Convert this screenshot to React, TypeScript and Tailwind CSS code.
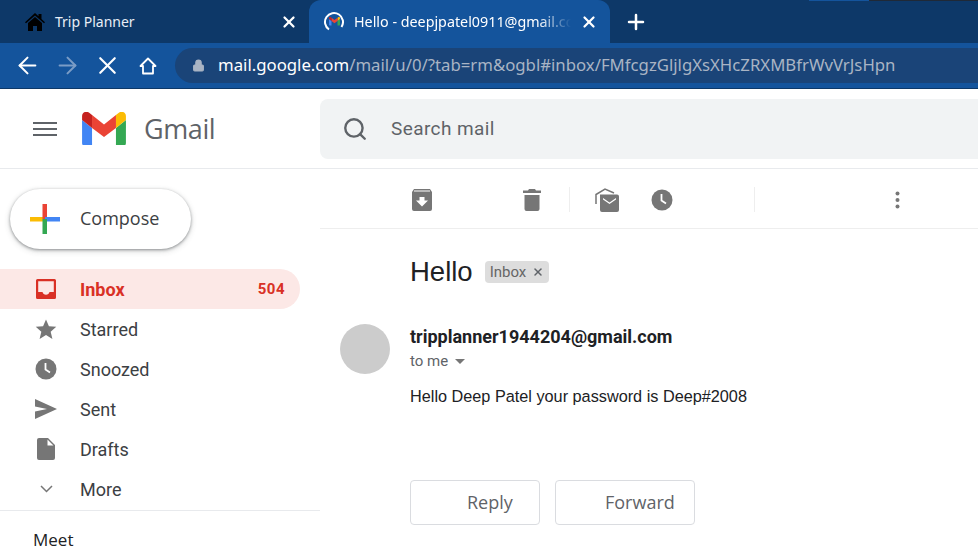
import React from 'react';
import { X, Plus, ArrowLeft, ArrowRight, Lock, Search } from 'lucide-react';

const tabFont = "font-['Noto_Sans',sans-serif]";
const roboto = "font-['Roboto',sans-serif]";

const GmailLogo = ({ size = 44 }: { size?: number }) => (
  <svg width={size} height={size * 0.77} viewBox="0 0 44 34">
    <path d="M3 34h7V16L0 8v23a3 3 0 0 0 3 3z" fill="#4285f4" />
    <path d="M34 34h7a3 3 0 0 0 3-3V8l-10 8z" fill="#34a853" />
    <path d="M34 3v13l10-8V4c0-3.5-4-5.500-6.800-3.400z" fill="#fbbc04" />
    <path d="M10 16V3l12 9.500L34 3v13l-12 9z" fill="#ea4335" />
    <path d="M0 4v4l10 8V3L6.800.6C4 -1.500 0 .5 0 4z" fill="#c5221f" />
  </svg>
);

const TabSpinner = () => (
  <div className="relative w-[20px] h-[20px] flex items-center justify-center">
    <svg width="20" height="20" viewBox="0 0 20 20" className="absolute inset-0">
      <path d="M5 17.500A9 9 0 1 1 17.500 15" fill="none" stroke="#ffffff" strokeWidth="2" />
    </svg>
    <GmailLogo size={11} />
  </div>
);

const SolidHome = () => (
  <svg width="20" height="18" viewBox="0 0 20 18" className="mr-[10px] shrink-0">
    <path fill="#000000" d="M10 0l3.500 3.200V1h3v5l3.500 3.200-1 1.100L10 2.600 1 10.300 0 9.200z" />
    <path fill="#000000" d="M10 4l7 6v8h-5v-5H8v5H3v-8z" />
  </svg>
);

const OutlineHome = () => (
  <svg width="18" height="18" viewBox="0 0 18 18" className="ml-[17px]">
    <path d="M9 1.500L1.500 9H4v7.500h10V9h2.500z" fill="none" stroke="#ffffff" strokeWidth="1.800" strokeLinejoin="round" />
  </svg>
);

const ComposePlus = () => (
  <svg width="32" height="32" viewBox="0 0 32 32">
    <rect x="1" y="14" width="14" height="4.500" fill="#fbbc04" />
    <rect x="13.500" y="1" width="4.500" height="15" fill="#ea4335" />
    <rect x="16" y="14" width="15" height="4.500" fill="#4285f4" />
    <rect x="13.500" y="16" width="4.500" height="15" fill="#34a853" />
  </svg>
);

const InboxIcon = () => (
  <svg width="20" height="20" viewBox="0 0 20 20">
    <path fillRule="evenodd" fill="#d93025" d="M1.500 0h17A1.500 1.500 0 0 1 20 1.500v17a1.500 1.500 0 0 1-1.500 1.500h-17A1.500 1.500 0 0 1 0 18.500v-17A1.500 1.500 0 0 1 1.500 0zM2.200 2.200V13H6.500c.3 1.500 1.800 2.700 3.500 2.700s3.200-1.200 3.500-2.700h4.300V2.200z" />
  </svg>
);

const StarIcon = () => (
  <svg width="22" height="22" viewBox="0 0 24 24">
    <path fill="#767676" d="M12 1.500l3.200 7.400 8 .7-6.100 5.300 1.900 7.900L12 18.600l-7 4.200 1.900-7.900L.8 9.600l8-.7z" />
  </svg>
);

const ClockIcon = ({ size = 22 }: { size?: number }) => (
  <svg width={size} height={size} viewBox="0 0 22 22">
    <circle cx="11" cy="11" r="10.500" fill="#767676" />
    <path d="M10.500 5v6.500l4.500 3" fill="none" stroke="#ffffff" strokeWidth="1.800" />
  </svg>
);

const SentIcon = () => (
  <svg width="22" height="20" viewBox="0 0 22 20">
    <path fill="#767676" d="M0 0l22 10L0 20v-7.500L12 10 0 7.500z" />
  </svg>
);

const DraftIcon = () => (
  <svg width="18" height="22" viewBox="0 0 18 22">
    <path fill="#767676" d="M2 0h9l7 7v13a2 2 0 0 1-2 2H2a2 2 0 0 1-2-2V2a2 2 0 0 1 2-2zM10.500 1.500V7.500h6z" fillRule="evenodd" />
  </svg>
);

const ChevronIcon = () => (
  <svg width="13" height="8" viewBox="0 0 13 8">
    <path d="M1 1l5.500 5.500L12 1" fill="none" stroke="#767676" strokeWidth="1.500" />
  </svg>
);

const ArchiveIcon = () => (
  <svg width="22" height="22" viewBox="0 0 22 22">
    <path fillRule="evenodd" fill="#767676" d="M3 0h16l2 3v17a2 2 0 0 1-2 2H3a2 2 0 0 1-2-2V3zM3 2.500h16v-1H3zM8.500 8v3.500H5l6 6 6-6h-3.500V8z" />
  </svg>
);

const TrashIcon = () => (
  <svg width="18" height="22" viewBox="0 0 18 22">
    <path fill="#767676" d="M6 0h6l1 1.500h5V4H0V1.500h5zM1.500 6h15v14a2 2 0 0 1-2 2h-11a2 2 0 0 1-2-2z" />
  </svg>
);

const MailOpenIcon = () => (
  <svg width="24" height="24" viewBox="0 0 24 24">
    <path fill="none" stroke="#767676" strokeWidth="1.500" d="M1 16V6.500L10 1l9 4" />
    <path fillRule="evenodd" fill="#767676" d="M5 6.500h17a2 2 0 0 1 2 2V22a2 2 0 0 1-2 2H7a2 2 0 0 1-2-2zM8 11.500l6.500 4.500 6.500-4.500V10l-6.500 4.500L8 10z" />
  </svg>
);

const DotsIcon = () => (
  <svg width="5" height="18" viewBox="0 0 5 18">
    <circle cx="2.500" cy="2.500" r="2" fill="#767676" />
    <circle cx="2.500" cy="9" r="2" fill="#767676" />
    <circle cx="2.500" cy="15.500" r="2" fill="#767676" />
  </svg>
);

const navItems = [
  { label: 'Starred', icon: <StarIcon /> },
  { label: 'Snoozed', icon: <ClockIcon /> },
  { label: 'Sent', icon: <SentIcon /> },
  { label: 'Drafts', icon: <DraftIcon /> },
  { label: 'More', icon: <ChevronIcon /> },
];

export default function App() {
  return (
    <div className="w-[978px] h-[557px] overflow-hidden bg-white relative">
      {/* chrome tabs */}
      <div className={`h-[43px] bg-[#0d3868] flex items-stretch ${tabFont} relative`}>
        <div className="w-[309px] flex items-center pl-[25px] pr-[11px] text-[#e8eef6] text-[14px] bg-[#0d3868]">
          <SolidHome />
          <span className="flex-1">Trip Planner</span>
          <X size={18} strokeWidth={3} className="text-white" />
        </div>
        <div className="w-[301px] bg-[#14549c] rounded-t-[12px] flex items-center pl-[15px] pr-[12px] text-white text-[14.300px]">
          <div className="mr-[10px] shrink-0"><TabSpinner /></div>
          <span className="flex-1 whitespace-nowrap overflow-hidden mask-r-from-85% mask-r-to-100%">Hello - deepjpatel0911@gmail.com</span>
          <X size={18} strokeWidth={3} className="text-white ml-[9px] shrink-0" />
        </div>
        <div className="flex items-center pl-[14px]">
          <Plus size={24} strokeWidth={2.500} className="text-white" />
        </div>
        <div className="absolute top-0 left-[809px] w-[60px] h-px bg-[#14549c]" />
        <div className="absolute top-0 left-[869px] w-[109px] h-px bg-[#1f2937]" />
      </div>

      {/* chrome toolbar */}
      <div className="h-[46px] bg-[#14549c] border-b border-[#0d3868] flex items-center pl-[14px]">
        <ArrowLeft size={27} strokeWidth={1.800} className="text-white" />
        <ArrowRight size={27} strokeWidth={1.800} className="text-[#7a9cc6] ml-[13px]" />
        <X size={29} strokeWidth={1.800} className="text-white ml-[12px]" />
        <OutlineHome />
        <div className={`ml-[18px] flex-1 h-[35px] -mt-px rounded-l-full bg-[#1a4478] flex items-center pl-[17px] ${tabFont} text-[16.750px]`}>
          <Lock size={13} fill="#a9b4c4" stroke="#a9b4c4" strokeWidth={2} className="mr-[13px]" />
          <span className="text-white">mail.google.com</span>
          <span className="text-[#a9b4c4]">/mail/u/0/?tab=rm&amp;ogbl#inbox/FMfcgzGljlgXsXHcZRXMBfrWvVrJsHpn</span>
        </div>
      </div>

      {/* gmail header */}
      <div className="h-[80px] border-b border-[#e8eaed] flex items-center">
        <div className="w-[320px] flex items-center pl-[33px]">
          <div className="flex flex-col gap-[4px] w-[24px]">
            <div className="h-[2px] bg-[#5f6368]" />
            <div className="h-[2px] bg-[#5f6368]" />
            <div className="h-[2px] bg-[#5f6368]" />
          </div>
          <div className="ml-[25px]"><GmailLogo /></div>
          <span className="ml-[18px] mt-[2px] text-[#5f6368] text-[27px] font-['Open_Sans',sans-serif] tracking-[-0.4px]">Gmail</span>
        </div>
        <div className={`flex-1 h-[60px] bg-[#f1f3f4] rounded-l-[8px] flex items-center pl-[22px] ${roboto}`}>
          <Search size={26} strokeWidth={2.200} className="text-[#5f6368]" />
          <span className="ml-[23px] mt-[2px] text-[19px] tracking-[0.4px] text-[#5f6368]">Search mail</span>
        </div>
      </div>

      <div className="flex h-[388px]">
        {/* sidebar */}
        <div className="w-[320px] shrink-0 flex flex-col">
          <div className="pl-[10px] pt-[20px] pb-[20px]">
            <div className="w-[181px] h-[60px] rounded-full bg-white shadow-[0_1px_3px_rgba(60,64,67,0.5),0_2px_6px_rgba(60,64,67,0.2)] flex items-center pl-[19px]">
              <ComposePlus />
              <span className="ml-[19px] -mt-[2px] text-[18px] text-[#3c4043] font-['Open_Sans',sans-serif]">Compose</span>
            </div>
          </div>
          <div className={`${roboto} text-[18px]`}>
            <div className="w-[300px] h-[40px] bg-[#fce8e6] rounded-r-full flex items-center pl-[35px] pr-[15px] text-[#d93025] font-bold">
              <div className="w-[22px] flex justify-center"><InboxIcon /></div>
              <span className="ml-[23px] flex-1">Inbox</span>
              <span className="text-[15px] tracking-[0.5px]">504</span>
            </div>
            {navItems.map((item) => (
              <div key={item.label} className="h-[40px] flex items-center pl-[35px] text-[#3c4043]">
                <div className="w-[22px] flex justify-center">{item.icon}</div>
                <span className="ml-[23px]">{item.label}</span>
              </div>
            ))}
          </div>
          <div className="border-t border-[#e8eaed] mt-px pl-[33px] pt-[16px]">
            <span className="text-[17px] text-[#202124] font-['Open_Sans',sans-serif]">Meet</span>
          </div>
        </div>

        {/* mail */}
        <div className="flex-1 flex flex-col">
          <div className="h-[60px] border-b border-[#eeeeee] flex items-center pt-[2px]">
            <div className="ml-[91px]"><ArchiveIcon /></div>
            <div className="ml-[90px]"><TrashIcon /></div>
            <div className="ml-[28px] w-px h-[25px] bg-[#eeeeee]" />
            <div className="ml-[25px]"><MailOpenIcon /></div>
            <div className="ml-[32px]"><ClockIcon /></div>
            <div className="ml-[81px] w-px h-[25px] bg-[#eeeeee]" />
            <div className="ml-[140px]"><DotsIcon /></div>
          </div>
          <div className="flex items-center pl-[90px] pt-[25px]">
            <span className="text-[27.500px] text-[#202124] font-['Liberation_Sans',sans-serif] leading-[36px] font-light">Hello</span>
            <span className={`ml-[12px] h-[22px] px-[5px] rounded-[4px] bg-[#dddddd] text-[#666666] text-[15px] flex items-center gap-[6px] ${roboto}`}>
              Inbox
              <X size={12} strokeWidth={3} className="text-[#5f6368]" />
            </span>
          </div>
          <div className="flex pl-[20px] pt-[34px]">
            <div className="w-[50px] h-[50px] rounded-full bg-[#cccccc] shrink-0" />
            <div className="ml-[20px]">
              <div className={`${roboto} font-bold text-[18px] leading-[26px] text-[#202124]`}>tripplanner1944204@gmail.com</div>
              <div className={`${roboto} text-[15px] leading-[20px] text-[#5f6368] flex items-center mt-[1px]`}>
                to me
                <span className="ml-[7px] w-0 h-0 border-x-[5px] border-x-transparent border-t-[5px] border-t-[#767676]" />
              </div>
              <div className="font-['Liberation_Sans',sans-serif] text-[16.250px] leading-[20px] text-[#202124] mt-[15px]">Hello Deep Patel your password is Deep#2008</div>
            </div>
          </div>
          <div className="flex pl-[90px] pt-[74px] gap-[15px] font-['Open_Sans',sans-serif] text-[18px] text-[#5f6368]">
            <div className="w-[130px] h-[45px] border border-[#dadce0] rounded-[4px] flex items-center pl-[56px]">Reply</div>
            <div className="w-[140px] h-[45px] border border-[#dadce0] rounded-[4px] flex items-center pl-[49px]">Forward</div>
          </div>
        </div>
      </div>
    </div>
  );
}
